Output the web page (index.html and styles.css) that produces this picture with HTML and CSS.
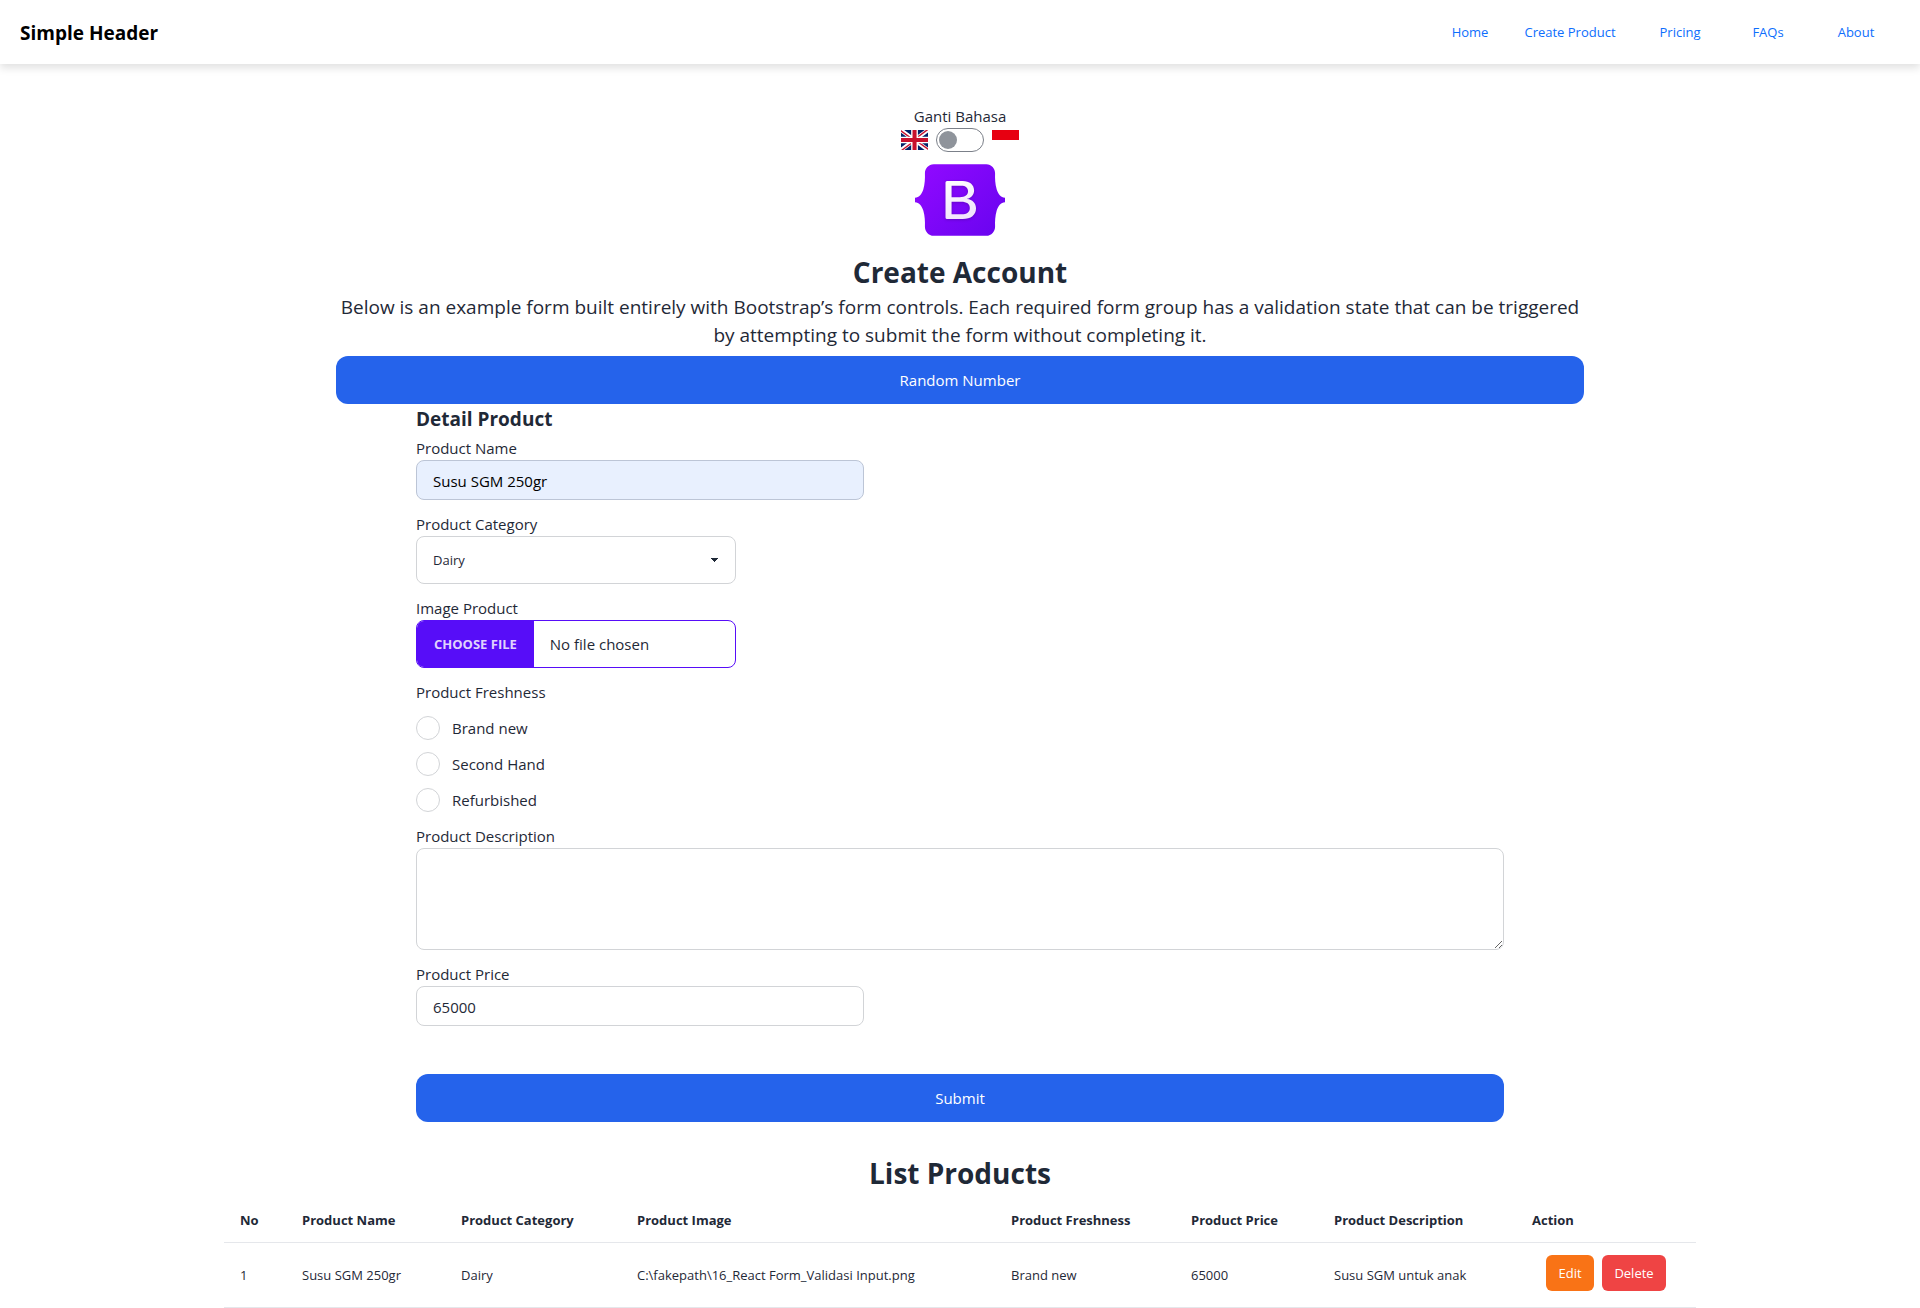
FILE: index.html
```html
<!DOCTYPE html>
<html lang="en">
<head>
<meta charset="utf-8">
<meta name="viewport" content="width=device-width, initial-scale=1">
<title>Create Product</title>
<link rel="stylesheet" href="styles.css">
</head>
<body>
<header class="header">
  <h1 class="brand">Simple Header</h1>
  <nav class="nav">
    <a href="#">Home</a>
    <a href="#">Create Product</a>
    <a href="#">Pricing</a>
    <a href="#">FAQs</a>
    <a href="#">About</a>
  </nav>
</header>
<main>
  <section class="intro">
    <label for="language">Ganti Bahasa</label>
    <div class="language">
      <svg class="flag" viewBox="0 0 640 480" preserveAspectRatio="none" role="img" aria-label="English">
        <path fill="#012169" d="M0 0h640v480H0z"/>
        <path fill="#FFF" d="m75 0 244 181L562 0h78v62L400 241l240 178v61h-80L320 301 81 480H0v-60l239-178L0 64V0h75z"/>
        <path fill="#C8102E" d="m424 281 216 159v40L369 281h55zm-184 20 6 35L54 480H0l240-179zM640 0v3L391 191l2-44L590 0h50zM0 0l239 176h-60L0 42V0z"/>
        <path fill="#FFF" d="M241 0v480h160V0H241zM0 160v160h640V160H0z"/>
        <path fill="#C8102E" d="M0 193v96h640v-96H0zM273 0v480h96V0h-96z"/>
      </svg>
      <input class="toggle" type="checkbox" id="language">
      <svg class="flag" viewBox="0 0 640 480" preserveAspectRatio="none" role="img" aria-label="Indonesia">
        <path fill="#FFF" d="M0 0h640v480H0z"/>
        <path fill="#E70011" d="M0 0h640v240H0z"/>
      </svg>
    </div>
    <svg class="logo" viewBox="0 0 118 94" role="img" aria-label="Bootstrap">
      <defs>
        <linearGradient id="shell" x1="13" y1="0" x2="105" y2="94" gradientUnits="userSpaceOnUse"><stop stop-color="#9009ff"/><stop offset="1" stop-color="#6a04f0"/></linearGradient>
        <linearGradient id="letter" x1="42" y1="22" x2="66" y2="66" gradientUnits="userSpaceOnUse"><stop stop-color="#fff"/><stop offset="1" stop-color="#f1e5fc"/></linearGradient>
      </defs>
      <path fill="url(#shell)" d="M24.509 0c-6.733 0-11.715 5.893-11.492 12.284.214 6.14-.064 14.092-2.066 20.577C8.943 39.365 5.547 43.485 0 44.014v5.972c5.547.529 8.943 4.649 10.951 11.153 2.002 6.485 2.28 14.437 2.066 20.577C12.794 88.106 17.776 94 24.51 94H93.5c6.733 0 11.714-5.893 11.491-12.284-.214-6.14.064-14.092 2.066-20.577 2.009-6.504 5.396-10.624 10.943-11.153v-5.972c-5.547-.529-8.934-4.649-10.943-11.153-2.002-6.484-2.28-14.437-2.066-20.577C105.214 5.894 100.233 0 93.5 0z"/>
      <path class="logo-letter" fill="url(#letter)" fill-rule="evenodd" d="M80 57.863C80 66.663 73.436 72 62.543 72H42a2 2 0 01-2-2V24a2 2 0 012-2h20.437c9.083 0 15.044 4.92 15.044 12.474 0 5.302-4.01 10.049-9.119 10.88v.277C75.317 46.394 80 51.21 80 57.863zM60.521 28.34H47.948v14.934h10.905c6.884 0 10.68-2.772 10.68-7.727 0-4.643-3.264-7.207-9.012-7.207zM47.948 49.2v16.458H60.91c7.167 0 10.964-2.876 10.964-8.281 0-5.406-3.903-8.178-11.425-8.178z"/>
    </svg>
    <h2 class="title">Create Account</h2>
    <p class="lead">Below is an example form built entirely with Bootstrap’s form controls. Each required form group has a validation state that can be triggered by attempting to submit the form without completing it.</p>
    <button class="primary" type="button">Random Number</button>
  </section>

  <form class="product-form">
    <h3 class="form-title">Detail Product</h3>
    <div class="field">
      <label for="name">Product Name</label>
      <input class="control text filled" id="name" type="text" value="Susu SGM 250gr">
    </div>
    <div class="field">
      <label for="category">Product Category</label>
      <select class="control select" id="category"><option>Dairy</option></select>
    </div>
    <div class="field">
      <label for="image">Image Product</label>
      <input class="control file" id="image" type="file">
    </div>
    <fieldset class="field choices">
      <legend>Product Freshness</legend>
      <label class="choice"><input type="radio" name="freshness">Brand new</label>
      <label class="choice"><input type="radio" name="freshness">Second Hand</label>
      <label class="choice"><input type="radio" name="freshness">Refurbished</label>
    </fieldset>
    <div class="field">
      <label for="description">Product Description</label>
      <textarea class="control area" id="description"></textarea>
    </div>
    <div class="field">
      <label for="price">Product Price</label>
      <input class="control text" id="price" type="text" value="65000">
    </div>
    <button class="primary submit" type="submit">Submit</button>
  </form>

  <section class="products">
    <h2 class="title">List Products</h2>
    <table class="table">
      <colgroup>
        <col class="col-no"><col class="col-name"><col class="col-category"><col class="col-image"><col class="col-freshness"><col class="col-price"><col class="col-description"><col class="col-action">
      </colgroup>
      <thead>
        <tr><th>No</th><th>Product Name</th><th>Product Category</th><th>Product Image</th><th>Product Freshness</th><th>Product Price</th><th>Product Description</th><th>Action</th></tr>
      </thead>
      <tbody>
        <tr>
          <td>1</td><td>Susu SGM 250gr</td><td>Dairy</td><td>C:\fakepath\16_React Form_Validasi Input.png</td><td>Brand new</td><td>65000</td><td>Susu SGM untuk anak</td>
          <td class="action-cell"><div class="actions"><button class="small edit" type="button">Edit</button><button class="small delete" type="button">Delete</button></div></td>
        </tr>
      </tbody>
    </table>
  </section>
</main>
</body>
</html>
```
FILE: styles.css
```css
* { box-sizing: border-box; }

body {
  margin: 0;
  background: #fff;
  color: #1f2937;
  font: 15px/24px "Open Sans", "Noto Sans", sans-serif;
}

h1, h2, h3, p { margin: 0; }

button, input, select, textarea { font: inherit; color: inherit; }

button { border: 0; cursor: pointer; }

.header {
  display: flex;
  align-items: center;
  justify-content: space-between;
  height: 64px;
  padding: 0 20px;
  box-shadow: 0 4px 8px rgba(0, 0, 0, 0.12);
}

.brand {
  padding-top: 2px;
  color: #000;
  font-size: 19px;
  font-weight: 700;
}

.nav {
  display: grid;
  grid-template-columns: 68px 132px 88px 88px 88px;
}

.nav a {
  color: #0d6efd;
  font-size: 13px;
  text-align: center;
  text-decoration: none;
}

.intro {
  display: flex;
  flex-direction: column;
  align-items: center;
  max-width: 1248px;
  margin: 0 auto;
  padding-top: 40px;
}

.language {
  display: flex;
  align-items: center;
  gap: 8px;
}

.flag {
  width: 27px;
  height: 20px;
}

.toggle {
  appearance: none;
  display: flex;
  align-items: center;
  width: 48px;
  height: 24px;
  margin: 0;
  padding: 0 2px;
  border: 1px solid #7b8089;
  border-radius: 12px;
}

.toggle::before {
  content: "";
  width: 18px;
  height: 18px;
  border-radius: 50%;
  background: #8f949b;
}

.toggle:checked { justify-content: flex-end; }

.logo {
  width: 90px;
  height: 72px;
  margin: 12px 0 16px;
}

.logo-letter { filter: drop-shadow(0 1px 2px rgba(0, 0, 0, 0.2)); }

.title {
  font-size: 28px;
  font-weight: 700;
  line-height: 40px;
  text-align: center;
}

.lead {
  padding-top: 1px;
  margin-bottom: 7px;
  font-size: 19px;
  line-height: 28px;
  text-align: center;
}

.primary {
  width: 100%;
  height: 48px;
  border-radius: 12px;
  background: #2563eb;
  color: #fff;
}

.product-form {
  display: flex;
  flex-direction: column;
  gap: 12px;
  max-width: 1248px;
  margin: 0 auto;
  padding: 0 80px;
}

.form-title {
  padding-top: 2px;
  margin-bottom: -8px;
  font-size: 19px;
  font-weight: 700;
  line-height: 26px;
}

.field {
  display: flex;
  flex-direction: column;
  min-width: 0;
  margin: 0;
  padding: 0;
  border: 0;
}

.control {
  width: 100%;
  border: 1px solid #d2d4d7;
  border-radius: 8px;
  background: #fff;
}

.text {
  max-width: 448px;
  height: 40px;
  padding: 2px 16px 0;
}

.filled {
  border-color: #bcc5d6;
  background: #e8f0fe;
  color: #000;
}

.select {
  appearance: none;
  max-width: 320px;
  height: 48px;
  padding: 0 16px;
  background-image: linear-gradient(45deg, transparent 50%, #1f2937 50%), linear-gradient(135deg, #1f2937 50%, transparent 50%);
  background-position: right 20px center, right 16px center;
  background-repeat: no-repeat;
  background-size: 4px 4px;
  font-size: 13px;
}

.file {
  max-width: 320px;
  height: 48px;
  overflow: hidden;
  border-color: #570df8;
  line-height: 46px;
}

.file::file-selector-button {
  height: 46px;
  margin: 0 16px 0 0;
  padding: 0 17px;
  border: 0;
  background: #570df8;
  color: #e0d2fe;
  font-family: inherit;
  font-size: 13px;
  font-weight: 700;
  text-transform: uppercase;
  vertical-align: top;
}

.choices legend {
  margin-bottom: 12px;
  padding: 0;
}

.choice {
  display: flex;
  align-items: center;
  gap: 12px;
}

.choice + .choice { margin-top: 12px; }

.choice input {
  appearance: none;
  width: 24px;
  height: 24px;
  margin: 0;
  border: 1px solid #d2d4d7;
  border-radius: 50%;
}

.choice input:checked { border: 6px solid #2563eb; }

.area {
  display: block;
  height: 102px;
  padding: 8px 16px;
  resize: both;
}

.submit { margin-top: 36px; }

.products {
  max-width: 1472px;
  margin: 0 auto;
  padding-top: 31px;
}

.table {
  width: 100%;
  border-collapse: collapse;
  table-layout: fixed;
  font-size: 13px;
  line-height: 20px;
  text-align: left;
}

.table th {
  padding: 17px 0 12px 16px;
  font-weight: 700;
}

.table td { padding: 14px 0 14px 16px; }

.table .action-cell { padding: 12px 0 16px 16px; }

.table tr { border-bottom: 1px solid #e5e7eb; }

.col-no { width: 62px; }
.col-name { width: 159px; }
.col-category { width: 176px; }
.col-image { width: 374px; }
.col-freshness { width: 180px; }
.col-price { width: 143px; }
.col-description { width: 198px; }
.col-action { width: 180px; }

.actions {
  display: flex;
  gap: 8px;
  padding-left: 14px;
}

.small {
  height: 36px;
  padding: 0 8px;
  border-radius: 6px;
  color: #fff;
}

.edit {
  min-width: 48px;
  background: #f97316;
}

.delete {
  min-width: 64px;
  background: #ef4444;
}
```
